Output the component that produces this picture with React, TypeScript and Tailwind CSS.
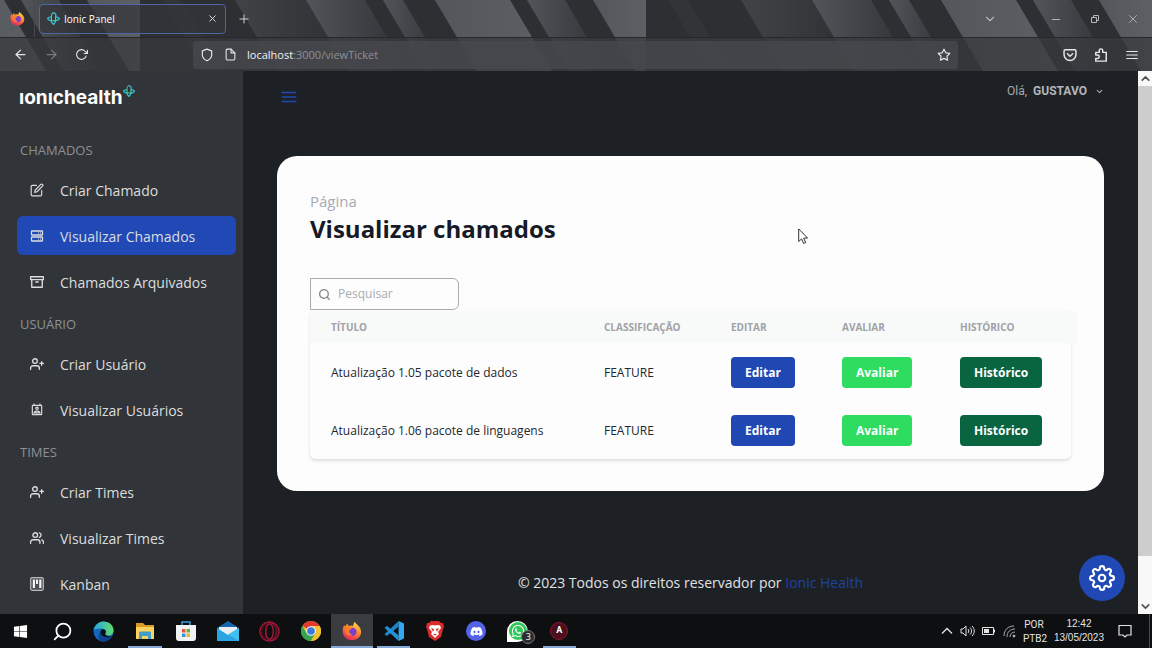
import type { ReactNode } from "react";
import { FaWindows, FaDiscord, FaWhatsapp } from "react-icons/fa";
import {
  FiArchive, FiArrowLeft, FiArrowRight, FiChevronDown, FiChevronUp, FiEdit, FiFile,
  FiMenu, FiPlus, FiRotateCw, FiSearch, FiSettings, FiShield, FiStar,
  FiUserPlus, FiUsers, FiX,
} from "react-icons/fi";
import { MdOutlinePermContactCalendar } from "react-icons/md";

const TILE = 506;

/* Diagonal light bands of the browser theme, one repeating tile. */
function ThemeTile() {
  return (
    <svg className="shrink-0" width={TILE} height="71" viewBox="0 0 506 71">
      <defs>
        <linearGradient id="bandSoft"><stop offset="0" stopColor="#414347" /><stop offset="1" stopColor="#2d2f33" /></linearGradient>
        <linearGradient id="bandMid"><stop offset="0" stopColor="#515458" /><stop offset="1" stopColor="#2f3135" /></linearGradient>
        <linearGradient id="bandLight"><stop offset="0" stopColor="#53575b" /><stop offset="1" stopColor="#5c6064" /></linearGradient>
      </defs>
      <rect width="506" height="71" fill="#2d2f33" />
      <path d="M22 0H42L84 71H64Z" fill="#323438" />
      <path d="M95 0H166L208 71H137Z" fill="url(#bandSoft)" />
      <path d="M166 0H225L267 71H208Z" fill="url(#bandMid)" />
      <path d="M243 0H263L305 71H285Z" fill="url(#bandMid)" />
      <path d="M295 0H370L412 71H337Z" fill="url(#bandLight)" />
      <path d="M387 0H425L467 71H429Z" fill="url(#bandMid)" />
      <path d="M453 0H506V71H495Z" fill="url(#bandLight)" />
    </svg>
  );
}

function Firefox({ size }: { size: number }) {
  return (
    <svg width={size} height={size} viewBox="0 0 24 24" aria-hidden="true">
      <defs>
        <linearGradient id="fox" x1="0.8" y1="0" x2="0.3" y2="1">
          <stop offset="0" stopColor="#ffe14a" /><stop offset="0.45" stopColor="#ff8a2a" /><stop offset="1" stopColor="#e8235f" />
        </linearGradient>
      </defs>
      <path d="M15 1c1 2 5 4 7 8 3 7-2 14-10 14S0 17 1 10c0-3 1-4 2-5l1 2 2-4 2 3c2-1 4-1 5 0 1-2 1-3 2-5Z" fill="url(#fox)" />
      <circle cx="12.5" cy="13" r="5" fill="#7a3fd0" />
      <path d="M4 8c3-2 6-1 8 1l-3 2c-1 3 1 5 4 5-3 3-8 1-9-3Z" fill="#ff7b2c" />
    </svg>
  );
}

/* Four-pointed star with an open swirl in its middle. */
function IonicMark({ size }: { size: number }) {
  return (
    <svg width={size} height={size} viewBox="0 0 24 24" fill="none" aria-hidden="true">
      <path d="M11 1c5 1 6 4 5 8 3 0 5 1 7 3-2 3-4 4-7 4-1 3-2 5-4 7-3-2-4-4-4-7-3 0-5-1-7-4 2-2 4-3 7-3" stroke="#37bdd4" strokeWidth="2.500" />
      <path d="M11 1c-2 2-3 5-3 8v7h8V9" stroke="#4fd99a" strokeWidth="2" />
    </svg>
  );
}

function Bar() {
  return (
    <header className="relative shrink-0 overflow-hidden text-[#e6e6e8]">
      <div className="absolute inset-0 flex justify-end" aria-hidden="true">
        <ThemeTile /><ThemeTile /><ThemeTile />
      </div>
      <div className="relative flex h-[37px] items-center">
        <div className="flex h-full w-[35px] items-center justify-center border-r border-[#46494d]"><Firefox size={15} /></div>
        <div className="ml-1 flex h-[30px] w-[187px] items-center gap-1 rounded border border-[#4d66a6] bg-[#34363b]/75 pr-[7px] pl-[7px]">
          <IonicMark size={13} />
          <span className="flex-1 pt-px text-[10px] text-white">Ionic Panel</span>
          <button aria-label="Fechar aba"><FiX size={11} /></button>
        </div>
        <button className="ml-[11px]" aria-label="Nova aba"><FiPlus size={14} strokeWidth={1.500} /></button>
        <div className="ml-auto flex items-center pr-3 text-[#b5b7ba]">
          <button className="mr-[52px]" aria-label="Listar abas"><FiChevronDown size={14} /></button>
          <button className="mr-[25px]" aria-label="Minimizar">
            <svg width="14" height="14" viewBox="0 0 14 14" stroke="currentColor"><path d="M3 7.500h8" /></svg>
          </button>
          <button className="mr-6" aria-label="Restaurar">
            <svg width="14" height="14" viewBox="0 0 14 14" fill="none" stroke="currentColor"><path d="M3.500 5.500h5v5h-5zM5.500 5.500v-2h5v5h-2" /></svg>
          </button>
          <button aria-label="Fechar"><FiX size={14} strokeWidth={1.500} /></button>
        </div>
      </div>
      <div className="relative flex h-[34px] items-center border-t border-[#26282b] bg-[#38393e]/75">
        <div className="flex w-[193px] items-center pl-[13px]">
          <button className="mr-4" aria-label="Voltar"><FiArrowLeft size={15} /></button>
          <button className="mr-4 text-[#77797d]" aria-label="Avançar"><FiArrowRight size={15} /></button>
          <button aria-label="Recarregar"><FiRotateCw size={13} /></button>
        </div>
        <div className="flex h-[28px] flex-1 items-center rounded bg-[#47484d]/80 px-[7px]">
          <FiShield size={14} />
          <FiFile className="mx-[10px]" size={13} />
          <p className="flex-1 pt-px text-[11px] text-[#8f9094]"><span className="text-[#f2f2f3]">localhost</span>:3000/viewTicket</p>
          <button aria-label="Favoritar"><FiStar size={14} /></button>
        </div>
        <div className="flex w-[194px] items-center justify-end gap-[17px] pr-[13px]">
          <button aria-label="Pocket">
            <svg width="14" height="14" viewBox="0 0 16 16" fill="none" stroke="currentColor" strokeWidth="1.700" strokeLinecap="round" strokeLinejoin="round"><path d="M2.500 2h11c.8 0 1.300.5 1.300 1.300V7.500a6.800 6.800 0 0 1-13.600 0V3.300C1.200 2.500 1.700 2 2.500 2ZM5 6.500l3 3 3-3" /></svg>
          </button>
          <button aria-label="Extensões">
            <svg width="14" height="14" viewBox="0 0 16 16" fill="none" stroke="currentColor" strokeWidth="1.700" strokeLinejoin="round"><path d="M2 5h4V3a2 2 0 0 1 4 0v2h4v10H2v-3h2a2 2 0 0 0 0-4H2Z" /></svg>
          </button>
          <button aria-label="Menu"><FiMenu size={14} /></button>
        </div>
      </div>
    </header>
  );
}

function RowsIcon() {
  return (
    <svg width="14" height="14" viewBox="0 0 14 14" fill="none" stroke="currentColor" strokeWidth="1.300" aria-hidden="true">
      <rect x="1.500" y="2" width="11" height="4" rx="0.500" />
      <rect x="1.500" y="8" width="11" height="4" rx="0.500" />
      <path d="M8 4h3M8 10h3" strokeWidth="1" strokeDasharray="1 1" />
    </svg>
  );
}

function KanbanIcon() {
  return (
    <svg width="14" height="14" viewBox="0 0 14 14" aria-hidden="true">
      <rect x="0.700" y="0.700" width="12.600" height="12.600" rx="1.500" fill="#4c5054" stroke="#b9bbbe" strokeWidth="1.200" />
      <path d="M2.800 2.500h2.200v8.500H2.800zM6 2.500h2v4.500H6zM9.200 2.500h2.200v8.500H9.200z" fill="#f2f2f2" />
    </svg>
  );
}

type Item = { label: string; icon: ReactNode; active?: boolean };
const sections: { title: string; items: Item[] }[] = [
  {
    title: "CHAMADOS",
    items: [
      { label: "Criar Chamado", icon: <FiEdit size={14} /> },
      { label: "Visualizar Chamados", icon: <RowsIcon />, active: true },
      { label: "Chamados Arquivados", icon: <FiArchive size={14} strokeWidth={2.300} /> },
    ],
  },
  {
    title: "USUÁRIO",
    items: [
      { label: "Criar Usuário", icon: <FiUserPlus size={14} strokeWidth={2.300} /> },
      { label: "Visualizar Usuários", icon: <MdOutlinePermContactCalendar size={14} /> },
    ],
  },
  {
    title: "TIMES",
    items: [
      { label: "Criar Times", icon: <FiUserPlus size={14} strokeWidth={2.300} /> },
      { label: "Visualizar Times", icon: <FiUsers size={14} strokeWidth={2.300} /> },
      { label: "Kanban", icon: <KanbanIcon /> },
    ],
  },
];

function Sidebar() {
  return (
    <aside className="w-[243px] shrink-0 overflow-hidden bg-[#313539] pr-[7px] pl-[17px] text-[#dcdddf]">
      <a href="#inicio" className="mt-[14px] mb-[30px] ml-[2px] flex h-6 items-start text-white">
        <span className="font-[Inter] text-[19px] leading-[26px] font-bold">ıonıchealth</span>
        <IonicMark size={12} />
      </a>
      <nav className="flex flex-col gap-3">
        {sections.map((s) => (
          <section key={s.title}>
            <h2 className="mb-[10px] ml-[3px] pt-px text-[13px] leading-5 text-[#8b9096]">{s.title}</h2>
            <ul className="flex flex-col gap-[7px]">
              {s.items.map((i) => (
                <li key={i.label}>
                  <a
                    href="#pagina"
                    className={`flex h-[39px] items-center rounded-md pt-px pl-[13px] text-[14px] ${i.active ? "bg-[#2049b5]" : ""}`}
                  >
                    <span className="mr-4 flex w-[14px] justify-center">{i.icon}</span>
                    {i.label}
                  </a>
                </li>
              ))}
            </ul>
          </section>
        ))}
      </nav>
    </aside>
  );
}

const tickets = [
  { title: "Atualização 1.05 pacote de dados", kind: "FEATURE" },
  { title: "Atualização 1.06 pacote de linguagens", kind: "FEATURE" },
];

function Action({ tone, children }: { tone: "blue" | "light" | "dark"; children: string }) {
  const tones = { blue: "bg-[#2048b2]", light: "bg-[#2edc5f]", dark: "bg-[#09653f]" };
  return <button className={`h-[31px] rounded px-[14px] pt-px align-middle text-[12px] font-bold text-white ${tones[tone]}`}>{children}</button>;
}

function Tickets() {
  return (
    <section className="rounded-[20px] bg-[#fdfdfd] px-[33px] pt-[34px] pb-8">
      <p className="text-[15px] leading-[22px] text-[#a6abb3]">Página</p>
      <h1 className="text-[24px] leading-[34px] font-bold text-[#151a26]">Visualizar chamados</h1>
      <label className="mt-8 flex h-[32px] w-[149px] items-center gap-[7px] rounded-r-md border border-[#a9abae] pl-[7px] text-[#85888b]">
        <FiSearch size={13} strokeWidth={2.500} className="shrink-0" />
        <input
          type="text"
          aria-label="Pesquisar"
          placeholder="Pesquisar"
          className="w-full min-w-0 bg-transparent text-[12px] text-[#333] outline-none placeholder:text-[#a9acb0]"
        />
      </label>
      <div className="rounded-md pt-px shadow-[0_2px_3px_rgba(0,0,0,0.12)]">
        <table className="w-[calc(100%+6px)] table-fixed text-left">
          <colgroup>
            <col />
            <col className="w-[127px]" />
            <col className="w-[111px]" />
            <col className="w-[118px]" />
            <col className="w-[138px]" />
          </colgroup>
          <thead className="bg-[#f8f9f9]">
            <tr className="h-[32px] text-[10px] text-[#a0a2a6]">
              {["TÍTULO", "CLASSIFICAÇÃO", "EDITAR", "AVALIAR", "HISTÓRICO"].map((h) => (
                <th key={h} className="pl-[21px] font-bold">{h}</th>
              ))}
            </tr>
          </thead>
          <tbody>
            {tickets.map((t) => (
              <tr key={t.title} className="h-[58px] text-[12px] text-[#24272e]">
                <td className="pt-px pl-[21px]">{t.title}</td>
                <td className="pt-px pl-[21px]">{t.kind}</td>
                <td className="pl-[21px]"><Action tone="blue">Editar</Action></td>
                <td className="pl-[21px]"><Action tone="light">Avaliar</Action></td>
                <td className="pl-[21px]"><Action tone="dark">Histórico</Action></td>
              </tr>
            ))}
          </tbody>
        </table>
      </div>
    </section>
  );
}

function Scrollbar() {
  return (
    <div className="flex w-[14px] shrink-0 flex-col items-center bg-[#f8f8f8] text-[#505050]" aria-hidden="true">
      <FiChevronUp className="my-px" size={13} strokeWidth={3} />
      <div className="w-full flex-1 bg-[#cdcdcd]" />
      <div className="h-[43px]" />
      <FiChevronDown className="my-px" size={13} strokeWidth={3} />
    </div>
  );
}

const Edge = () => (
  <svg width="21" height="21" viewBox="0 0 24 24">
    <defs><linearGradient id="edge" x1="0" x2="1"><stop stopColor="#26a6e6" /><stop offset="1" stopColor="#63dc66" /></linearGradient></defs>
    <circle cx="12" cy="12" r="11.500" fill="#1467bd" />
    <path d="M.5 11C2 3 8 .5 12 .5c7 0 11.500 5 11.500 10 0 4-3 6-6 6-3 0-4-1-3.500-2 2-3-.5-6-4-6S1 9 .5 11Z" fill="url(#edge)" />
    <path d="M8 13c0 5 5 8 13 5-2 3-5 5.500-9 5.500-5 0-7-6-4-10.500Z" fill="#123f91" />
    <path d="M14 14.500c2-3-.5-5-2.500-5-3 0-4 4-2 6.500 2 3 9 4 12 1-4 1-8 0-7.500-2.500Z" fill="#0d1113" />
  </svg>
);
const Folder = () => (
  <svg width="20" height="18" viewBox="0 0 20 18">
    <path d="M1 1h7l2 2h9v14H1Z" fill="#d99a2c" /><path d="M1 5h18v12H1Z" fill="#fbd35c" />
    <path d="M4 17v-6c0-1 .5-1.500 1.500-1.500h9c1 0 1.500.5 1.500 1.500v6h-3v-3H7v3Z" fill="#3f9fc9" />
  </svg>
);
const Store = () => (
  <svg width="20" height="20" viewBox="0 0 20 20">
    <path d="M6 5V1h8v4" fill="none" stroke="#3aa0dc" strokeWidth="1.500" />
    <path d="M0 4h20v13c0 2-1 3-3 3H3c-2 0-3-1-3-3Z" fill="#f1f2f3" />
    <path d="M6 8h3.500v3.500H6z" fill="#e8543a" /><path d="M10.500 8H14v3.500h-3.500z" fill="#6cae3c" />
    <path d="M6 12.500h3.500V16H6z" fill="#3296d8" /><path d="M10.500 12.500H14V16h-3.500z" fill="#f0b42c" />
  </svg>
);
const Mail = () => (
  <svg width="22" height="20" viewBox="0 0 22 20">
    <path d="M0 7 11 0l11 7v3H0Z" fill="#1668ab" /><path d="M2 6h18v8H2Z" fill="#e9eef2" />
    <path d="M0 7l11 7 11-7v13H0Z" fill="#2ba4e4" /><path d="M11 13.500 22 7v13Z" fill="#41c0ee" />
  </svg>
);
const Opera = () => (
  <svg width="21" height="21" viewBox="0 0 22 22" fill="none" stroke="#a3173a">
    <circle cx="11" cy="11" r="10" strokeWidth="1.500" /><circle cx="11" cy="11" r="8" strokeWidth="0.600" />
    <ellipse cx="11" cy="11" rx="4" ry="8" strokeWidth="1.500" /><ellipse cx="12.500" cy="11" rx="5.500" ry="9" strokeWidth="0.800" />
  </svg>
);
const Chrome = () => (
  <svg width="20" height="20" viewBox="0 0 24 24">
    <circle cx="12" cy="12" r="12" fill="#f2c22f" />
    <path d="M12 12 1.600 6A12 12 0 0 1 22.400 6H12Z" fill="#dc3b30" />
    <path d="M1.600 6A12 12 0 0 0 12 24l5.200-9L12 12 6.800 15Z" fill="#35a350" />
    <path d="M12 6h10.400a12 12 0 0 1-10.400 18l5.200-9Z" fill="#f2c22f" />
    <circle cx="12" cy="12" r="5.800" fill="#f4f4f4" /><circle cx="12" cy="12" r="4.600" fill="#3a78e0" />
  </svg>
);
const VsCode = () => (
  <svg width="20" height="20" viewBox="0 0 24 24">
    <path d="M17.500 0 24 3v18l-6.500 3Z" fill="#35a7ee" />
    <path d="M17.500 0v7L3.500 18 .5 16Z" fill="#1d84cb" /><path d="M17.500 24v-7L3.500 6 .5 8Z" fill="#2490d8" />
  </svg>
);
const Brave = () => (
  <svg width="18" height="20" viewBox="0 0 18 20">
    <path d="M5 0h8l2 2h2l1 4-1 2-2 8-6 4-6-4L1 8 0 6l1-4h2Z" fill="#dc2b2b" />
    <path d="M4 4.500 7 4l2 .500L11 4l3 .500L15 7l-3 4 1 2-4 4-4-4 1-2-3-4Z" fill="#fff" />
    <path d="m5 7 3 1-1 3ZM13 7l-3 1 1 3ZM7 13h4l-2 1.500Z" fill="#dc2b2b" />
  </svg>
);
const WhatsApp = () => (
  <span className="relative flex size-[21px] items-center justify-center rounded-full rounded-bl-none bg-white">
    <span className="flex size-[18px] items-center justify-center rounded-full bg-[#31c85a]"><FaWhatsapp size={14} /></span>
    <span className="absolute top-[9px] left-[14px] flex size-[14px] items-center justify-center rounded-full border border-[#777] bg-[#2b2d30] text-[9px]">3</span>
  </span>
);

type TaskApp = { name: string; icon: ReactNode; open?: boolean; focused?: boolean };
const apps: TaskApp[] = [
  { name: "Iniciar", icon: <FaWindows size={15} /> },
  { name: "Pesquisar", icon: <FiSearch size={21} className="-scale-x-100" /> },
  { name: "Edge", icon: <Edge /> },
  { name: "Explorador de Arquivos", icon: <Folder />, open: true },
  { name: "Loja", icon: <Store /> },
  { name: "Email", icon: <Mail /> },
  { name: "Opera GX", icon: <Opera /> },
  { name: "Chrome", icon: <Chrome /> },
  { name: "Firefox", icon: <Firefox size={20} />, open: true, focused: true },
  { name: "VS Code", icon: <VsCode />, open: true },
  { name: "Brave", icon: <Brave /> },
  { name: "Discord", icon: <span className="flex size-5 items-center justify-center rounded-full bg-[#5563e8]"><FaDiscord size={13} /></span> },
  { name: "WhatsApp", icon: <WhatsApp /> },
  { name: "A", icon: <span className="flex size-[18px] items-center justify-center rounded-full border border-[#8c1730] bg-[#4b101c] font-[Roboto] text-[9px] font-bold">A</span>, open: true },
];

function Taskbar() {
  return (
    <footer className="flex h-[34px] shrink-0 justify-between bg-[#0d0f10] text-white">
      <div className="grid w-[580px] grid-cols-14">
        {apps.map((a) => (
          <button
            key={a.name}
            aria-label={a.name}
            className={`relative flex items-center justify-center ${a.focused ? "bg-[#3a3c3f]" : ""}`}
          >
            {a.icon}
            {a.open && <span className={`absolute bottom-0 h-[2px] bg-[#86a9d8] ${a.focused ? "inset-x-0" : "inset-x-1"}`} />}
          </button>
        ))}
      </div>
      <div className="flex items-center pr-[2px] font-['Liberation_Sans'] text-[10px] leading-[14px] text-[#e4e4e4]">
        <svg width="12" height="8" viewBox="0 0 12 8" fill="none" stroke="currentColor" strokeWidth="1.300"><path d="m1 6.500 5-5 5 5" /></svg>
        <svg className="ml-[7px]" width="15" height="14" viewBox="0 0 15 14" fill="none" stroke="currentColor"><path d="M1 5h2l3-3v10L3 9H1ZM8 5c1 1 1 3 0 4M10 3.500c2 2 2 5 0 7M12 2c3 3 3 7 0 10" /></svg>
        <svg className="ml-[7px]" width="13" height="8" viewBox="0 0 13 8"><path d="M.500.500h11v7H.500ZM12.500 2.500v3" fill="none" stroke="currentColor" /><path d="M2 2h5v4H2z" fill="currentColor" /></svg>
        <svg className="ml-2" width="13" height="13" viewBox="0 0 13 13" fill="none" stroke="#a9a9a9"><path d="M1 11C1 5 5 1 11 1M4 12C4 7 7 4 12 4M7 12c0-3 2-5 5-5" /><circle cx="11" cy="11" r="1" fill="#fff" /></svg>
        <p className="ml-[7px] w-[22px] pt-px text-center font-[Roboto]">POR<br />PTB2</p>
        <p className="ml-[9px] text-center">12:42<br />13/05/2023</p>
        <button className="ml-[14px]" aria-label="Notificações">
          <svg width="14" height="14" viewBox="0 0 14 14" fill="none" stroke="currentColor" strokeWidth="1.200"><path d="M1 1.500h12v9.500H9L7 13 5 11H1Z" /></svg>
        </button>
        <span className="ml-[17px] h-full w-px bg-[#4a4a4a]" />
      </div>
    </footer>
  );
}

export default function App() {
  return (
    <div className="flex h-screen flex-col overflow-hidden font-['Open_Sans',sans-serif]">
      <Bar />
      <div className="flex min-h-0 flex-1">
        <Sidebar />
        <main className="relative flex min-w-0 flex-1 flex-col bg-[#1d2126] px-[34px]">
          <div className="flex h-[85px] shrink-0 items-start justify-between pt-3">
            <button className="mt-[5px] ml-[3px] text-[#2148b3]" aria-label="Abrir menu"><FiMenu size={18} /></button>
            <button className="flex items-center font-[Roboto] text-[12px] leading-[17px] text-[#a5a7aa]">
              Olá,<b className="mr-2 ml-[6px] text-[#b4b6b9]">GUSTAVO</b><FiChevronDown size={9} strokeWidth={3} />
            </button>
          </div>
          <Tickets />
          <p className="mt-auto pb-[21px] text-center text-[14px] leading-5 text-[#e0e1e3]">
            © 2023 Todos os direitos reservador por <a href="#ionic" className="text-[#1e439f]">Ionic Health</a>
          </p>
          <button className="absolute right-[13px] bottom-[13px] flex size-[46px] items-center justify-center rounded-full bg-[#2049b5] text-white" aria-label="Configurações">
            <FiSettings size={26} />
          </button>
          <svg className="absolute top-[157px] left-[555px]" width="11" height="17" viewBox="0 0 11 17" aria-hidden="true">
            <path d="M.700.900v12.600l2.900-2.600 2 4.600 2.100-.900-2-4.500h3.900Z" fill="#fff" stroke="#333" />
          </svg>
        </main>
        <Scrollbar />
      </div>
      <Taskbar />
    </div>
  );
}
